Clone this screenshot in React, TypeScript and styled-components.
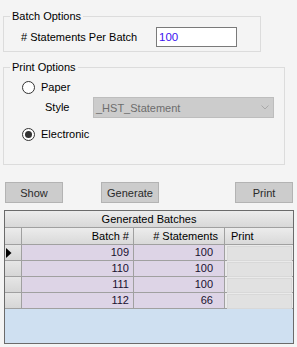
import React from "react";
import styled, { createGlobalStyle } from "styled-components";

const Global = createGlobalStyle`
  html, body { margin: 0; padding: 0; background: #f4f4f4; }
  body { font-family: "Liberation Sans", Arial, sans-serif; font-size: 11px; color: #000; }
  * { box-sizing: border-box; }
`;

const Page = styled.div`
  width: 297px;
  height: 347px;
  background: #f4f4f4;
  padding-top: 10px;
  overflow: hidden;
  display: flex;
  flex-direction: column;
`;

const Group = styled.fieldset<{ $w: number; $mt?: number }>`
  margin: ${(p) => p.$mt ?? 0}px 0 0 3px;
  width: ${(p) => p.$w}px;
  border: 1px solid #dcdcdc;
  padding: 0;
  min-width: 0;
  display: flex;
  flex-direction: column;
`;

const Legend = styled.legend`
  margin-left: 6px;
  padding: 0 2px;
  line-height: 13px;
  font-size: 11px;
`;

const BatchRow = styled.div`
  display: grid;
  grid-template-columns: 135px 81px;
  align-items: center;
  padding: 4px 0 4px 17px;
`;

const Label = styled.span`
  line-height: 13px;
`;

const TextInput = styled.div`
  height: 20px;
  border: 1px solid #7a7a7a;
  background: #fff;
  color: #3a12f0;
  line-height: 18px;
  padding-left: 2px;
  font-size: 11.5px;
`;

const PrintBody = styled.div`
  display: flex;
  flex-direction: column;
  padding: 7px 0 23px 18px;
`;

const RadioRow = styled.div<{ $mt?: number }>`
  display: flex;
  align-items: center;
  height: 13px;
  gap: 6px;
  margin-top: ${(p) => p.$mt ?? 0}px;
`;

const RadioCircle = styled.span<{ $checked?: boolean }>`
  width: 13px;
  height: 13px;
  border-radius: 50%;
  border: 1px solid #333;
  background: #fff;
  display: flex;
  align-items: center;
  justify-content: center;
  &::after {
    content: "";
    display: ${(p) => (p.$checked ? "block" : "none")};
    width: 7px;
    height: 7px;
    border-radius: 50%;
    background: #333;
  }
`;

const StyleRow = styled.div`
  display: grid;
  grid-template-columns: 48px 181px;
  align-items: center;
  margin: 3px 0 0 23px;
`;

const Combo = styled.div`
  height: 21px;
  background: #cccccc;
  border: 1px solid #bdbdbd;
  color: #6d6d6d;
  display: flex;
  align-items: center;
  justify-content: space-between;
  padding: 0 4px 0 2px;
  font-size: 11px;
`;

const ButtonBar = styled.div`
  display: flex;
  margin-top: 17px;
  padding: 0 4px 0 5px;
`;

const Button = styled.div<{ $ml?: number; $auto?: boolean }>`
  width: 58px;
  height: 21px;
  background: #cccccc;
  border: 1px solid #b3b3b3;
  color: #2a2a2a;
  display: flex;
  align-items: center;
  justify-content: center;
  font-size: 11px;
  margin-left: ${(p) => (p.$auto ? "auto" : `${p.$ml ?? 0}px`)};
`;

const GridBox = styled.div`
  margin: 7px 0 0 4px;
  width: 290px;
  height: 134px;
  border: 1px solid #6b6b6b;
  background: #cfe0f1;
`;

const TitleBar = styled.div`
  height: 17px;
  border-bottom: 1px solid #a0a0a0;
  background: linear-gradient(#ececec, #d8d8d8);
  text-align: center;
  line-height: 16px;
  font-size: 11px;
`;

const Table = styled.div`
  display: grid;
  grid-template-columns: 16px 111px 90px 68px;
  grid-auto-rows: 15px;
  grid-template-rows: 16px;
  gap: 1px;
  background: #a0a0a0;
  border-bottom: 1px solid #a0a0a0;
`;

const HeadCell = styled.div<{ $align?: "left" | "right"; $pad?: number }>`
  background: linear-gradient(#ececec, #d9d9d9);
  text-align: ${(p) => p.$align ?? "right"};
  ${(p) => (p.$align === "left" ? `padding-left: ${p.$pad ?? 0}px;` : `padding-right: ${p.$pad ?? 0}px;`)}
  line-height: 16px;
  font-size: 11px;
`;

const RowHead = styled.div`
  background: linear-gradient(#e6e6e6, #d6d6d6);
  display: flex;
  align-items: center;
  padding-left: 1px;
`;

const DataCell = styled.div<{ $pad: number }>`
  background: #ddd4e6;
  text-align: right;
  padding-right: ${(p) => p.$pad}px;
  line-height: 15px;
  color: #1a1030;
  font-size: 11px;
`;

const ButtonCell = styled.div`
  background: #eaeaea;
  padding: 1px 1px 1px 2px;
  &::before {
    content: "";
    display: block;
    height: 100%;
    background: #e1e1e1;
    border: 1px solid #d8d8d8;
  }
`;

const rows = [
  { batch: 109, count: 100 },
  { batch: 110, count: 100 },
  { batch: 111, count: 100 },
  { batch: 112, count: 66 },
];

export default function App() {
  return (
    <>
      <Global />
      <Page>
        <Group $w={258}>
          <Legend>Batch Options</Legend>
          <BatchRow>
            <Label># Statements Per Batch</Label>
            <TextInput>100</TextInput>
          </BatchRow>
        </Group>

        <Group $w={282} $mt={9}>
          <Legend>Print Options</Legend>
          <PrintBody>
            <RadioRow>
              <RadioCircle />
              <Label>Paper</Label>
            </RadioRow>
            <StyleRow>
              <Label>Style</Label>
              <Combo>
                <span>_HST_Statement</span>
                <svg width="8" height="5" viewBox="0 0 8 5">
                  <path d="M0.5 0.5 L4 4 L7.5 0.5" fill="none" stroke="#a8a8a8" strokeWidth="1" />
                </svg>
              </Combo>
            </StyleRow>
            <RadioRow $mt={10}>
              <RadioCircle $checked />
              <Label>Electronic</Label>
            </RadioRow>
          </PrintBody>
        </Group>

        <ButtonBar>
          <Button>Show</Button>
          <Button $ml={38}>Generate</Button>
          <Button $auto>Print</Button>
        </ButtonBar>

        <GridBox>
          <TitleBar>Generated Batches</TitleBar>
          <Table>
            <HeadCell />
            <HeadCell $pad={4}>Batch #</HeadCell>
            <HeadCell $pad={6}># Statements</HeadCell>
            <HeadCell $align="left" $pad={6}>Print</HeadCell>
            {rows.map((r, i) => (
              <React.Fragment key={r.batch}>
                <RowHead>
                  {i === 0 && (
                    <svg width="6" height="10" viewBox="0 0 6 10">
                      <path d="M0 0 L5.5 5 L0 10 Z" fill="#000" />
                    </svg>
                  )}
                </RowHead>
                <DataCell $pad={4}>{r.batch}</DataCell>
                <DataCell $pad={11}>{r.count}</DataCell>
                <ButtonCell />
              </React.Fragment>
            ))}
          </Table>
        </GridBox>
      </Page>
    </>
  );
}
